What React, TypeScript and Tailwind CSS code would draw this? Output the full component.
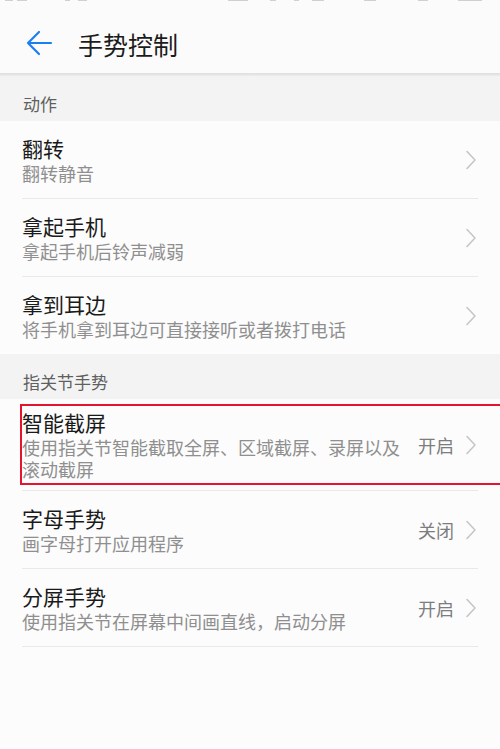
import React from "react";

type Row = { title: string; sub: string; value?: string; highlight?: boolean };

const Chevron = () => (
  <svg width="12" height="20" viewBox="0 0 12 20" className="shrink-0">
    <path d="M2 1.5 L10 10 L2 18.5" fill="none" stroke="#c6c6c6" strokeWidth="1.6" strokeLinecap="round" strokeLinejoin="round" />
  </svg>
);

const ItemRow = ({ row, last }: { row: Row; last?: boolean }) => (
  <div className="relative bg-[#fcfcfc]">
    <div className="mx-[22px] flex min-h-[77px] items-center py-[10px]">
      <div className="flex min-w-0 flex-1 flex-col pr-[6px]">
        <div className="text-[21px] leading-[27px] text-[#1a1a1a]">{row.title}</div>
        <div className="mt-[1px] text-[18px] leading-[21.5px] text-[#8f8f8f]">{row.sub}</div>
      </div>
      {row.value && <div className="mr-[11px] shrink-0 text-[18px] leading-[24px] text-[#7d7d7d]">{row.value}</div>}
      <div className="mr-[1px]">
        <Chevron />
      </div>
    </div>
    {!last && <div className="mx-[22px] h-[1px] bg-[#e9e9e9]" />}
    {row.highlight && (
      <div className="pointer-events-none absolute left-[20px] right-[-4px] top-[5px] bottom-[6px] border-2 border-[#e4132e]" />
    )}
  </div>
);

const Section = ({ title }: { title: string }) => (
  <div className="h-[45px] bg-[#f3f3f3] px-[23px] pt-[17px] text-[17px] leading-[22px] text-[#5f5f5f]">{title}</div>
);

const statusMarks = [
  [5, 8],
  [17, 10],
  [65, 5],
  [78, 9],
  [228, 20],
  [270, 6],
  [294, 5],
  [312, 12],
  [364, 12],
  [418, 10],
  [458, 24],
];

export default function App() {
  const actions: Row[] = [
    { title: "翻转", sub: "翻转静音" },
    { title: "拿起手机", sub: "拿起手机后铃声减弱" },
    { title: "拿到耳边", sub: "将手机拿到耳边可直接接听或者拨打电话" },
  ];
  const knuckle: Row[] = [
    { title: "智能截屏", sub: "使用指关节智能截取全屏、区域截屏、录屏以及滚动截屏", value: "开启", highlight: true },
    { title: "字母手势", sub: "画字母打开应用程序", value: "关闭" },
    { title: "分屏手势", sub: "使用指关节在屏幕中间画直线，启动分屏", value: "开启" },
  ];
  return (
    <div
      className="min-h-[749px] w-[500px] overflow-hidden bg-[#fcfcfc]"
      style={{ fontFamily: '"Noto Sans CJK SC", "Noto Sans", sans-serif' }}
    >
      <div className="relative h-[73px] bg-[#fbfbfb]">
        <div className="relative h-[2px]">
          {statusMarks.map(([x, w], i) => (
            <span key={i} className="absolute top-0 h-[1px] bg-[#d0d0d0]" style={{ left: x, width: w }} />
          ))}
        </div>
        <div className="flex h-[71px] items-center pl-[25px] pt-[12px]">
          <svg width="28" height="28" viewBox="0 0 28 28" className="mt-[-2px]">
            <path d="M26 14 H3 M14 3 L3 14 L14 25" fill="none" stroke="#1b7ff2" strokeWidth="2.2" strokeLinecap="round" strokeLinejoin="round" />
          </svg>
          <div className="ml-[25px] text-[25px] leading-[32px] text-[#1c1c1c]">手势控制</div>
        </div>
      </div>
      <div className="h-[3px] bg-gradient-to-b from-[#dedede] to-[#ececec]" />
      <Section title="动作" />
      {actions.map((r, i) => (
        <ItemRow key={r.title} row={r} last={i === actions.length - 1} />
      ))}
      <Section title="指关节手势" />
      {knuckle.map((r) => (
        <ItemRow key={r.title} row={r} />
      ))}
    </div>
  );
}
